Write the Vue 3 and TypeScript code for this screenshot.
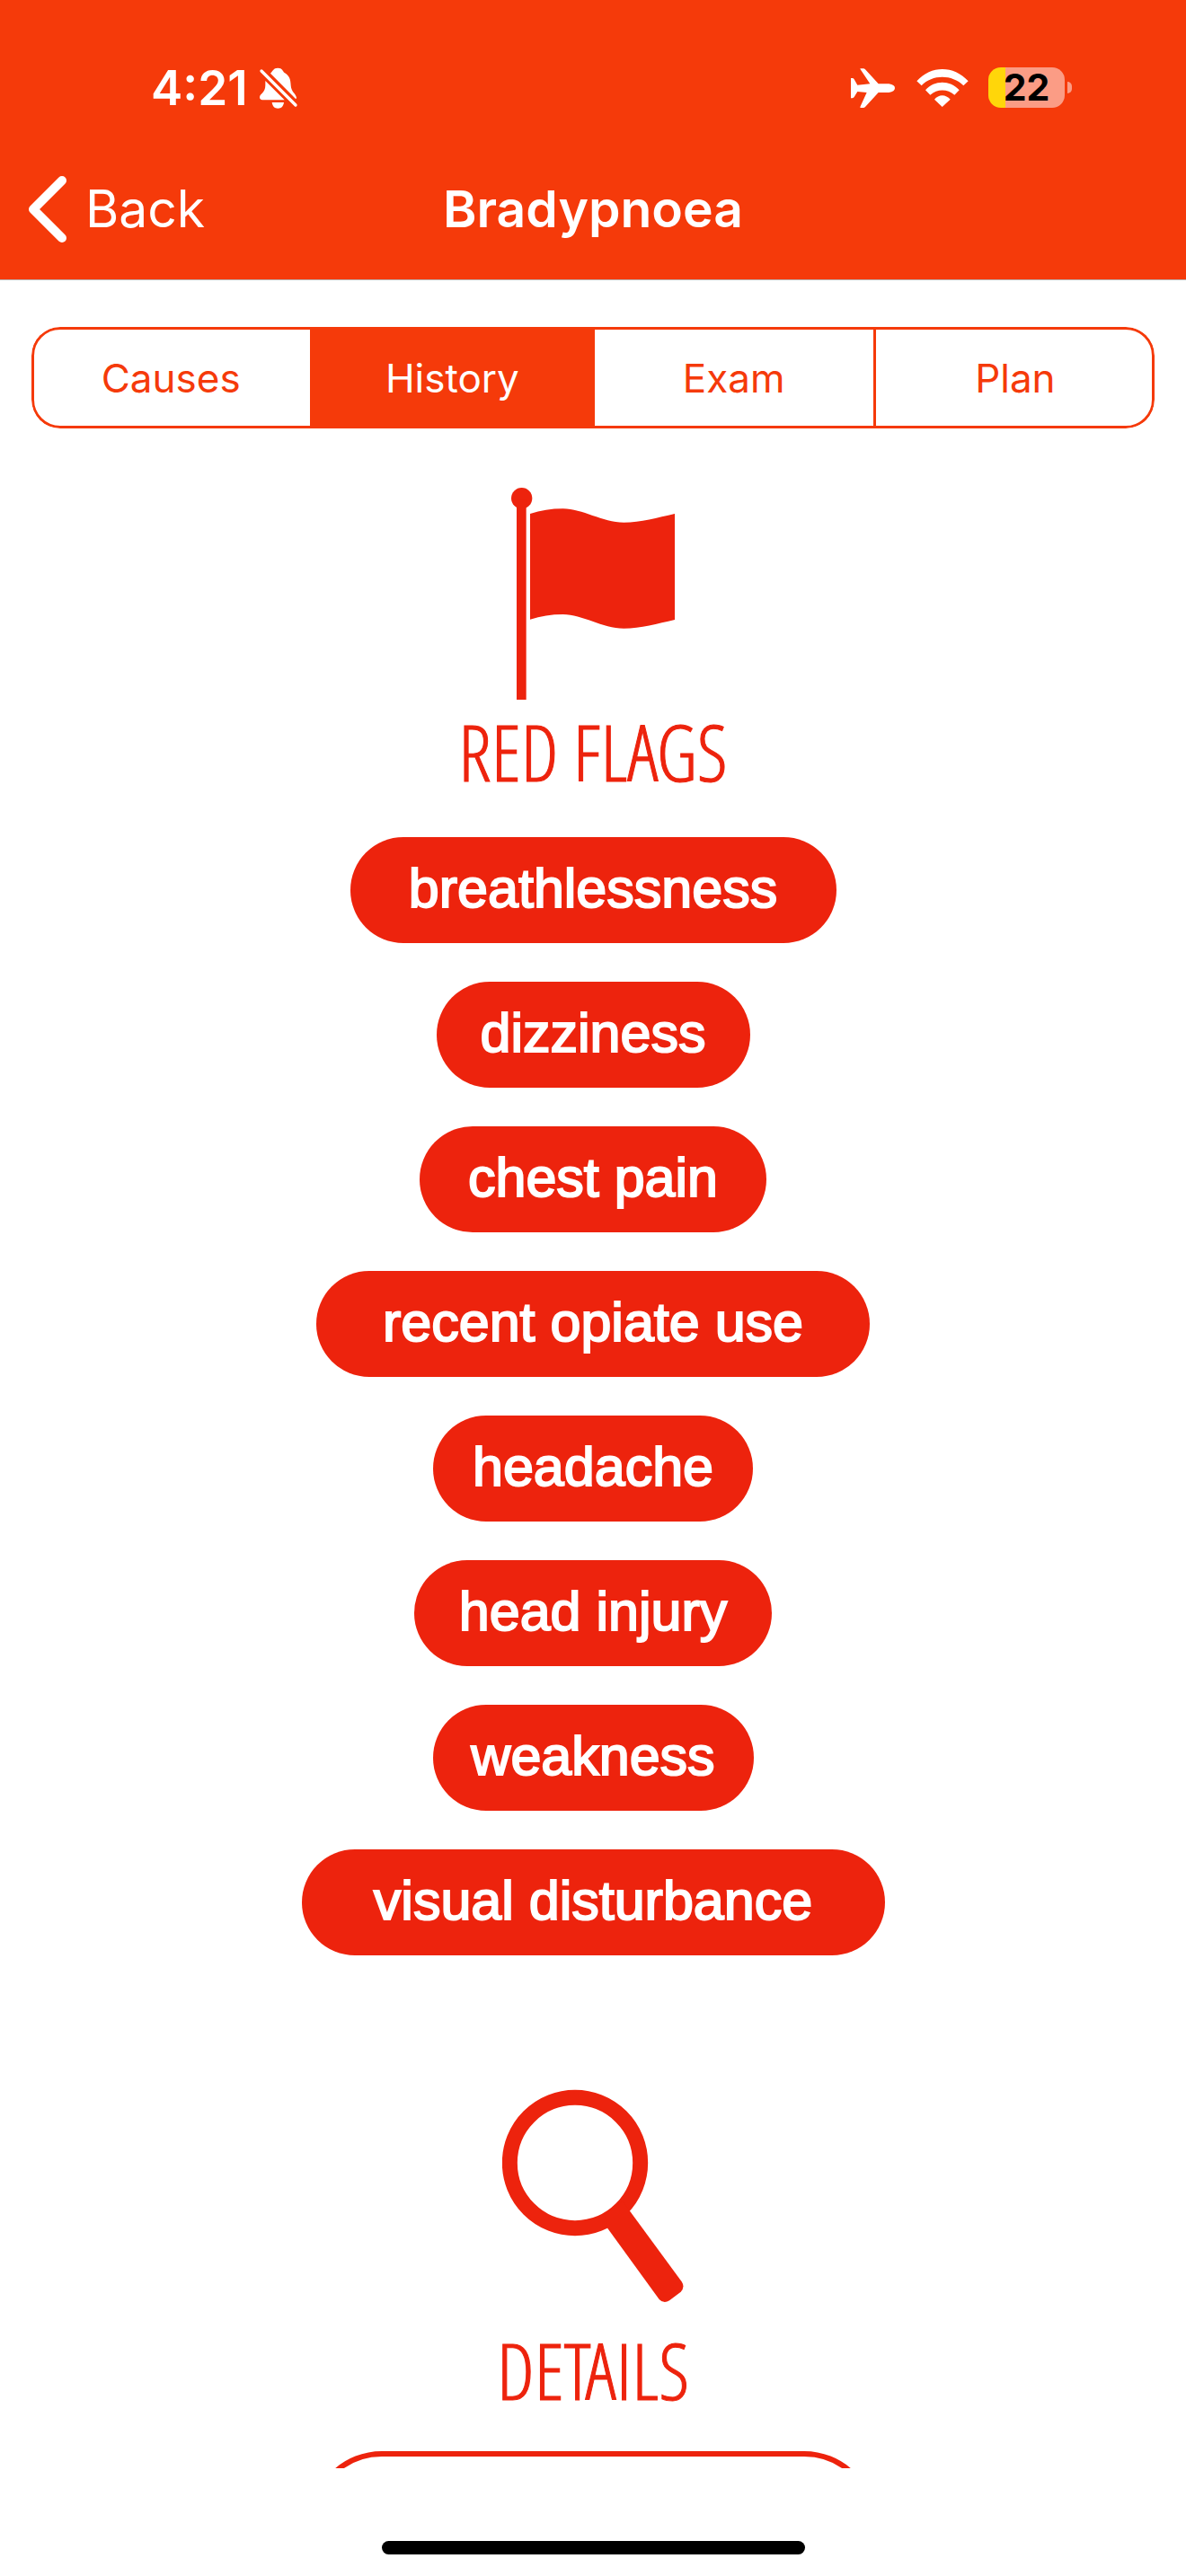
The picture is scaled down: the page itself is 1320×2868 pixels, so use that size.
<script setup lang="ts">
import { ref } from 'vue'

interface Flag {
  label: string
  width: number
}

const tabs: string[] = ['Causes', 'History', 'Exam', 'Plan']
const activeTab = ref('History')

const flags: Flag[] = [
  { label: 'breathlessness', width: 541 },
  { label: 'dizziness', width: 349 },
  { label: 'chest pain', width: 386 },
  { label: 'recent opiate use', width: 616 },
  { label: 'headache', width: 356 },
  { label: 'head injury', width: 398 },
  { label: 'weakness', width: 357 },
  { label: 'visual disturbance', width: 649 },
]
</script>

<template>
  <div class="screen">
    <header class="header">
      <div class="status">
        <div class="status-group">
          <span class="clock">4:21</span>
          <svg class="bell" viewBox="864 102 132 144" aria-hidden="true">
            <path d="M903 125C911 118 912 107 928 107C943 107 944 118 950 123C967 133 970 145 971 165C972 187 988 193 990 206Q990 210 987 210Z" />
            <path d="M886 150L950 214H876Q867 213 867 205C868 192 886 190 886 165Z" />
            <path d="M908 222H948C946 235 940 242 928 242C916 242 910 235 908 222Z" />
            <path d="M873 117L987 231" fill="none" stroke="#fff" stroke-width="10" stroke-linecap="round" />
          </svg>
        </div>
        <div class="status-group">
          <svg class="plane" viewBox="141 108 147 132" aria-hidden="true">
            <path d="M173 109H183Q186 109 189 112L233 160H268Q288 163 288 174Q288 186 268 189H233L189 237Q186 240 183 240H173Q171 240 173 235L194 189L163 186L152 204Q149 208 145 208H141V141H146Q150 141 152 145L163 164L205 160L173 112Q171 109 173 109Z" />
          </svg>
          <svg class="wifi" viewBox="359 105 174 126" aria-hidden="true">
            <path d="M360 145C408 92 483 92 532 145L516 160C478 122 412 122 376 160Z" />
            <path d="M389 175C420 141 470 141 502 175L486 191C463 170 428 170 405 191Z" />
            <path d="M419 206C433 188 457 188 472 206L445 231Z" />
          </svg>
          <div class="battery">
            <span class="battery-body"><span class="battery-text">22</span></span>
            <span class="battery-nub"></span>
          </div>
        </div>
      </div>
      <nav class="nav">
        <button class="back" type="button">
          <svg class="chevron" viewBox="0 0 43 74" aria-hidden="true">
            <path d="M38 5L6 37L38 69" fill="none" stroke="#fff" stroke-width="10" stroke-linecap="round" stroke-linejoin="round" />
          </svg>
          Back
        </button>
        <h1 class="title">Bradypnoea</h1>
      </nav>
    </header>

    <main class="content">
      <div class="segments" role="tablist">
        <button
          v-for="tab in tabs"
          :key="tab"
          type="button"
          role="tab"
          class="segment"
          :class="{ active: tab === activeTab }"
          :aria-selected="tab === activeTab"
          @click="activeTab = tab"
        >
          {{ tab }}
        </button>
      </div>

      <section class="section">
        <svg class="flag-icon" viewBox="267 69 546 735" aria-hidden="true">
          <circle cx="302" cy="104" r="35" />
          <path d="M285 110H317V777H285Z" />
          <path d="M330 156C365 145 400 139 440 139C505 139 570 185 643 185C700 185 755 169 813 156V510C755 523 700 539 643 539C570 539 505 492 440 492C400 492 365 498 330 509Z" />
        </svg>
        <h2 class="heading">RED FLAGS</h2>
        <ul class="pills">
          <li v-for="flag in flags" :key="flag.label">
            <button class="pill" type="button" :style="{ width: flag.width + 'px' }">{{ flag.label }}</button>
          </li>
        </ul>
      </section>

      <section class="section details">
        <svg class="search-icon" viewBox="238 81 606 792" aria-hidden="true">
          <circle cx="481" cy="327" r="218" fill="none" stroke="#ed230d" stroke-width="51" />
          <path d="M580 500L640 455L837 724Q849 742 834 758L796 787Q777 799 762 783L590 546Z" />
        </svg>
        <h2 class="heading">DETAILS</h2>
        <div class="card"></div>
      </section>
    </main>

    <footer class="footer"><span class="home"></span></footer>
  </div>
</template>

<style>
body {
  background: #fff;
}
</style>

<style scoped>
.screen {
  height: 100vh;
  display: flex;
  flex-direction: column;
  overflow: hidden;
  background: #fff;
  font-family: Inter, 'Liberation Sans', sans-serif;
}

button {
  margin: 0;
  padding: 0;
  border: 0;
  background: none;
  font: inherit;
  color: inherit;
  cursor: pointer;
}

.header {
  flex: none;
  padding-top: 40px;
  border-bottom: 1px solid #b8b0ae;
  background: #f53a0a;
  color: #fff;
}

.header svg {
  fill: #fff;
}

.status {
  height: 115px;
  padding: 0 127px 0 168px;
  display: flex;
  align-items: center;
  justify-content: space-between;
}

.status-group {
  display: flex;
  align-items: center;
}

.clock {
  font-size: 53px;
  font-weight: 600;
  line-height: 64px;
}

.bell {
  width: 44px;
  height: 48px;
  margin-left: 12px;
}

.plane {
  width: 49px;
  height: 44px;
}

.wifi {
  width: 58px;
  height: 42px;
  margin: 0 22px 0 24px;
}

.battery {
  display: flex;
  align-items: center;
  gap: 3px;
}

.battery-body {
  width: 85px;
  height: 45px;
  border-radius: 14px;
  display: flex;
  align-items: center;
  justify-content: center;
  background: linear-gradient(to right, #ffd60a 19px, #fb9c85 19px);
}

.battery-text {
  color: #000;
  font-size: 41px;
  font-weight: 700;
  line-height: 45px;
}

.battery-nub {
  width: 5px;
  height: 13px;
  border-radius: 0 5px 5px 0;
  background: #fb9c85;
}

.nav {
  height: 156px;
  padding: 0 31px;
  display: grid;
  grid-template-columns: 1fr auto 1fr;
  align-items: center;
}

.back {
  justify-self: start;
  display: flex;
  align-items: center;
  font-size: 57px;
  line-height: 72px;
}

.chevron {
  width: 43px;
  height: 74px;
  margin-right: 21px;
}

.title {
  margin: 0;
  font-size: 57px;
  font-weight: 600;
  line-height: 72px;
}

.content {
  flex: 1;
  min-height: 0;
  overflow: hidden;
}

.segments {
  position: relative;
  height: 113px;
  margin: 52px 35px 0;
  display: flex;
  border-radius: 32px;
  overflow: hidden;
}

/* Outline laid over the segments so that all four share the full width. */
.segments::after {
  content: '';
  position: absolute;
  inset: 0;
  border: 3px solid #f53a0a;
  border-radius: 32px;
  pointer-events: none;
}

.segment {
  flex: 1;
  color: #f53a0a;
  font-size: 44px;
}

.segment + .segment {
  border-left: 3px solid #f53a0a;
}

.segment.active {
  background: #f53a0a;
  color: #fff;
}

.section {
  margin-top: 66px;
  display: flex;
  flex-direction: column;
  align-items: center;
}

.section.details {
  margin-top: 149px;
}

.section svg {
  fill: #ed230d;
}

.flag-icon {
  width: 182px;
  height: 245px;
}

.search-icon {
  width: 202px;
  height: 264px;
}

.heading {
  margin: 0;
  color: #ed230d;
  font-family: 'Open Sans Condensed Light', 'Open Sans Condensed', 'Liberation Sans Narrow', sans-serif;
  font-size: 86px;
  font-weight: 400;
  line-height: 98px;
  padding-bottom: 2px;
  -webkit-text-stroke: 1px #ed230d;
}

.pills {
  margin: 44px 0 0;
  padding: 0;
  list-style: none;
  display: flex;
  flex-direction: column;
  align-items: center;
  gap: 43px;
}

.pills li {
  display: flex;
}

.pill {
  height: 118px;
  padding-bottom: 4px;
  border-radius: 59px;
  background: #ed230d;
  color: #fff;
  font-family: 'Liberation Sans', sans-serif;
  font-size: 61px;
  -webkit-text-stroke: 2px #fff;
  white-space: nowrap;
}

.card {
  width: 630px;
  height: 400px;
  margin-top: 39px;
  box-sizing: border-box;
  border: 6px solid #ed230d;
  border-radius: 80px;
}

.footer {
  flex: none;
  height: 120px;
  padding-bottom: 24px;
  box-sizing: border-box;
  display: flex;
  align-items: flex-end;
  justify-content: center;
}

.home {
  width: 471px;
  height: 15px;
  border-radius: 8px;
  background: #000;
}
</style>
